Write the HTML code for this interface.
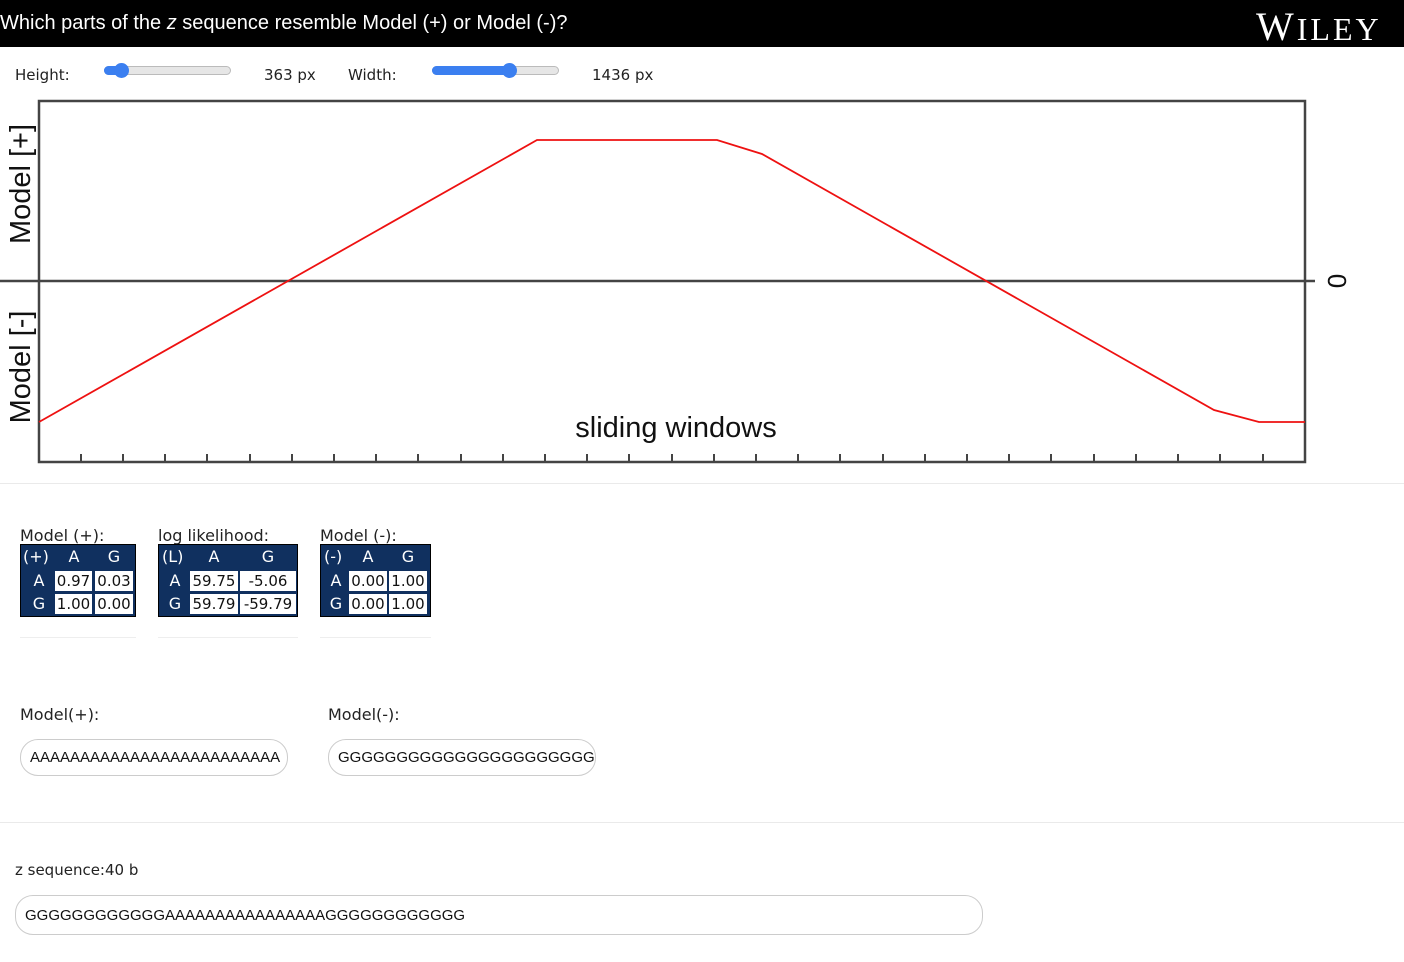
<!DOCTYPE html>
<html><head><meta charset="utf-8"><style>
*{box-sizing:border-box;margin:0;padding:0}
body{width:1404px;height:962px;position:relative;background:#fff;font-family:"DejaVu Sans","Liberation Sans",sans-serif;color:#222;overflow:hidden}
.a{position:absolute;white-space:nowrap}
.hdr{left:0;top:0;width:1404px;height:47px;background:#000}
.lbl{font-size:15px;color:#222}
.track{height:9px;border-radius:5px;background:#e6e6e6;border:1px solid #bbb}
.fill{height:9px;border-radius:5px;background:#3b7ff0}
.thumb{width:15px;height:15px;border-radius:50%;background:#3b7ff0}
.tbl{background:#10305f;border:1px solid #000}
.c{position:absolute;background:#fff;color:#111;font-size:15px;text-align:center;line-height:20px;height:20px}
.h{position:absolute;color:#fff;font-size:16px;text-align:center;line-height:22px}
.inp{border:1px solid #ccc;border-radius:18px;background:#fff;font-family:"Liberation Sans",sans-serif;font-size:15px;color:#111;overflow:hidden}
.sep{left:0;width:1404px;height:1px;background:#eaeaea}
</style></head><body>
<div class="a hdr"></div>
<div class="a" style="left:0;top:12px;color:#fff;font-family:'Liberation Sans',sans-serif;font-size:20px">Which parts of the <i>z</i> sequence resemble Model (+) or Model (-)?</div>
<div class="a" style="left:1256px;top:3px;color:#fff;font-family:'Liberation Serif',serif;font-size:40px;letter-spacing:3px">W<span style="font-size:32px">ILEY</span></div>

<div class="a lbl" style="left:15px;top:66px">Height:</div>
<div class="a track" style="left:104px;top:66px;width:127px"></div>
<div class="a fill" style="left:104px;top:66px;width:20px"></div>
<div class="a thumb" style="left:114px;top:63px"></div>
<div class="a lbl" style="left:264px;top:66px">363 px</div>
<div class="a lbl" style="left:348px;top:66px">Width:</div>
<div class="a track" style="left:432px;top:66px;width:127px"></div>
<div class="a fill" style="left:432px;top:66px;width:80px"></div>
<div class="a thumb" style="left:502px;top:63px"></div>
<div class="a lbl" style="left:592px;top:66px">1436 px</div>

<svg class="a" style="left:0;top:0" width="1404" height="480">
<rect x="39" y="101" width="1266" height="361" fill="none" stroke="#444" stroke-width="2.5"/>
<line x1="0" y1="281" x2="1315" y2="281" stroke="#444" stroke-width="2.5"/>
<g stroke="#444" stroke-width="2">
<path d="M81 454V462M123 454V462M165 454V462M207 454V462M250 454V462M292 454V462M334 454V462M376 454V462M418 454V462M461 454V462M503 454V462M545 454V462M587 454V462M629 454V462M672 454V462M714 454V462M756 454V462M798 454V462M840 454V462M883 454V462M925 454V462M967 454V462M1009 454V462M1051 454V462M1094 454V462M1136 454V462M1178 454V462M1220 454V462M1263 454V462"/>
</g>
<polyline points="39,422 537,140 717,140 762,154 1214,410 1259,422 1305,422" fill="none" stroke="#ee1111" stroke-width="1.8"/>
<text x="676" y="437" text-anchor="middle" font-family="Liberation Sans,sans-serif" font-size="29" fill="#111">sliding windows</text>
<text transform="translate(30,184) rotate(-90)" text-anchor="middle" font-family="Liberation Sans,sans-serif" font-size="29" fill="#111">Model [+]</text>
<text transform="translate(30,367) rotate(-90)" text-anchor="middle" font-family="Liberation Sans,sans-serif" font-size="29" fill="#111">Model [-]</text>
<text transform="translate(1328,281) rotate(90)" text-anchor="middle" font-family="Liberation Sans,sans-serif" font-size="26" fill="#111">0</text>
</svg>
<div class="a sep" style="top:483px"></div>

<div class="a lbl" style="left:20px;top:526px;font-size:16px">Model (+):</div>
<div class="a tbl" style="left:20px;top:544px;width:116px;height:73px">
<div class="h" style="left:2px;top:1px">(+)</div><div class="h" style="left:34px;top:1px;width:38px">A</div><div class="h" style="left:74px;top:1px;width:38px">G</div>
<div class="h" style="left:4px;top:25px;width:28px">A</div><div class="h" style="left:4px;top:48px;width:28px">G</div>
<div class="c" style="left:34px;top:26px;width:37px">0.97</div><div class="c" style="left:74px;top:26px;width:38px">0.03</div>
<div class="c" style="left:34px;top:49px;width:37px">1.00</div><div class="c" style="left:74px;top:49px;width:38px">0.00</div>
</div>
<div class="a lbl" style="left:158px;top:526px;font-size:16px">log likelihood:</div>
<div class="a tbl" style="left:158px;top:544px;width:140px;height:73px">
<div class="h" style="left:3px;top:1px">(L)</div><div class="h" style="left:31px;top:1px;width:48px">A</div><div class="h" style="left:81px;top:1px;width:56px">G</div>
<div class="h" style="left:4px;top:25px;width:24px">A</div><div class="h" style="left:4px;top:48px;width:24px">G</div>
<div class="c" style="left:31px;top:26px;width:48px">59.75</div><div class="c" style="left:81px;top:26px;width:56px">-5.06</div>
<div class="c" style="left:31px;top:49px;width:48px">59.79</div><div class="c" style="left:81px;top:49px;width:56px">-59.79</div>
</div>
<div class="a lbl" style="left:320px;top:526px;font-size:16px">Model (-):</div>
<div class="a tbl" style="left:320px;top:544px;width:111px;height:73px">
<div class="h" style="left:3px;top:1px">(-)</div><div class="h" style="left:28px;top:1px;width:38px">A</div><div class="h" style="left:68px;top:1px;width:38px">G</div>
<div class="h" style="left:4px;top:25px;width:22px">A</div><div class="h" style="left:4px;top:48px;width:22px">G</div>
<div class="c" style="left:28px;top:26px;width:38px">0.00</div><div class="c" style="left:68px;top:26px;width:38px">1.00</div>
<div class="c" style="left:28px;top:49px;width:38px">0.00</div><div class="c" style="left:68px;top:49px;width:38px">1.00</div>
</div>
<div class="a" style="left:20px;top:637px;width:116px;height:1px;background:#eee"></div>
<div class="a" style="left:158px;top:637px;width:140px;height:1px;background:#eee"></div>
<div class="a" style="left:320px;top:637px;width:111px;height:1px;background:#eee"></div>

<div class="a lbl" style="left:20px;top:705px;font-size:16px">Model(+):</div>
<div class="a inp" style="left:20px;top:739px;width:268px;height:37px;padding:9px 0 0 9px">AAAAAAAAAAAAAAAAAAAAAAAAA</div>
<div class="a lbl" style="left:328px;top:705px;font-size:16px">Model(-):</div>
<div class="a inp" style="left:328px;top:739px;width:268px;height:37px;padding:9px 0 0 9px">GGGGGGGGGGGGGGGGGGGGGGG</div>
<div class="a sep" style="top:822px"></div>

<div class="a lbl" style="left:15px;top:861px;font-size:15px">z sequence:40 b</div>
<div class="a inp" style="left:15px;top:895px;width:968px;height:40px;padding:11px 0 0 9px">GGGGGGGGGGGGAAAAAAAAAAAAAAAAGGGGGGGGGGGG</div>
</body></html>
